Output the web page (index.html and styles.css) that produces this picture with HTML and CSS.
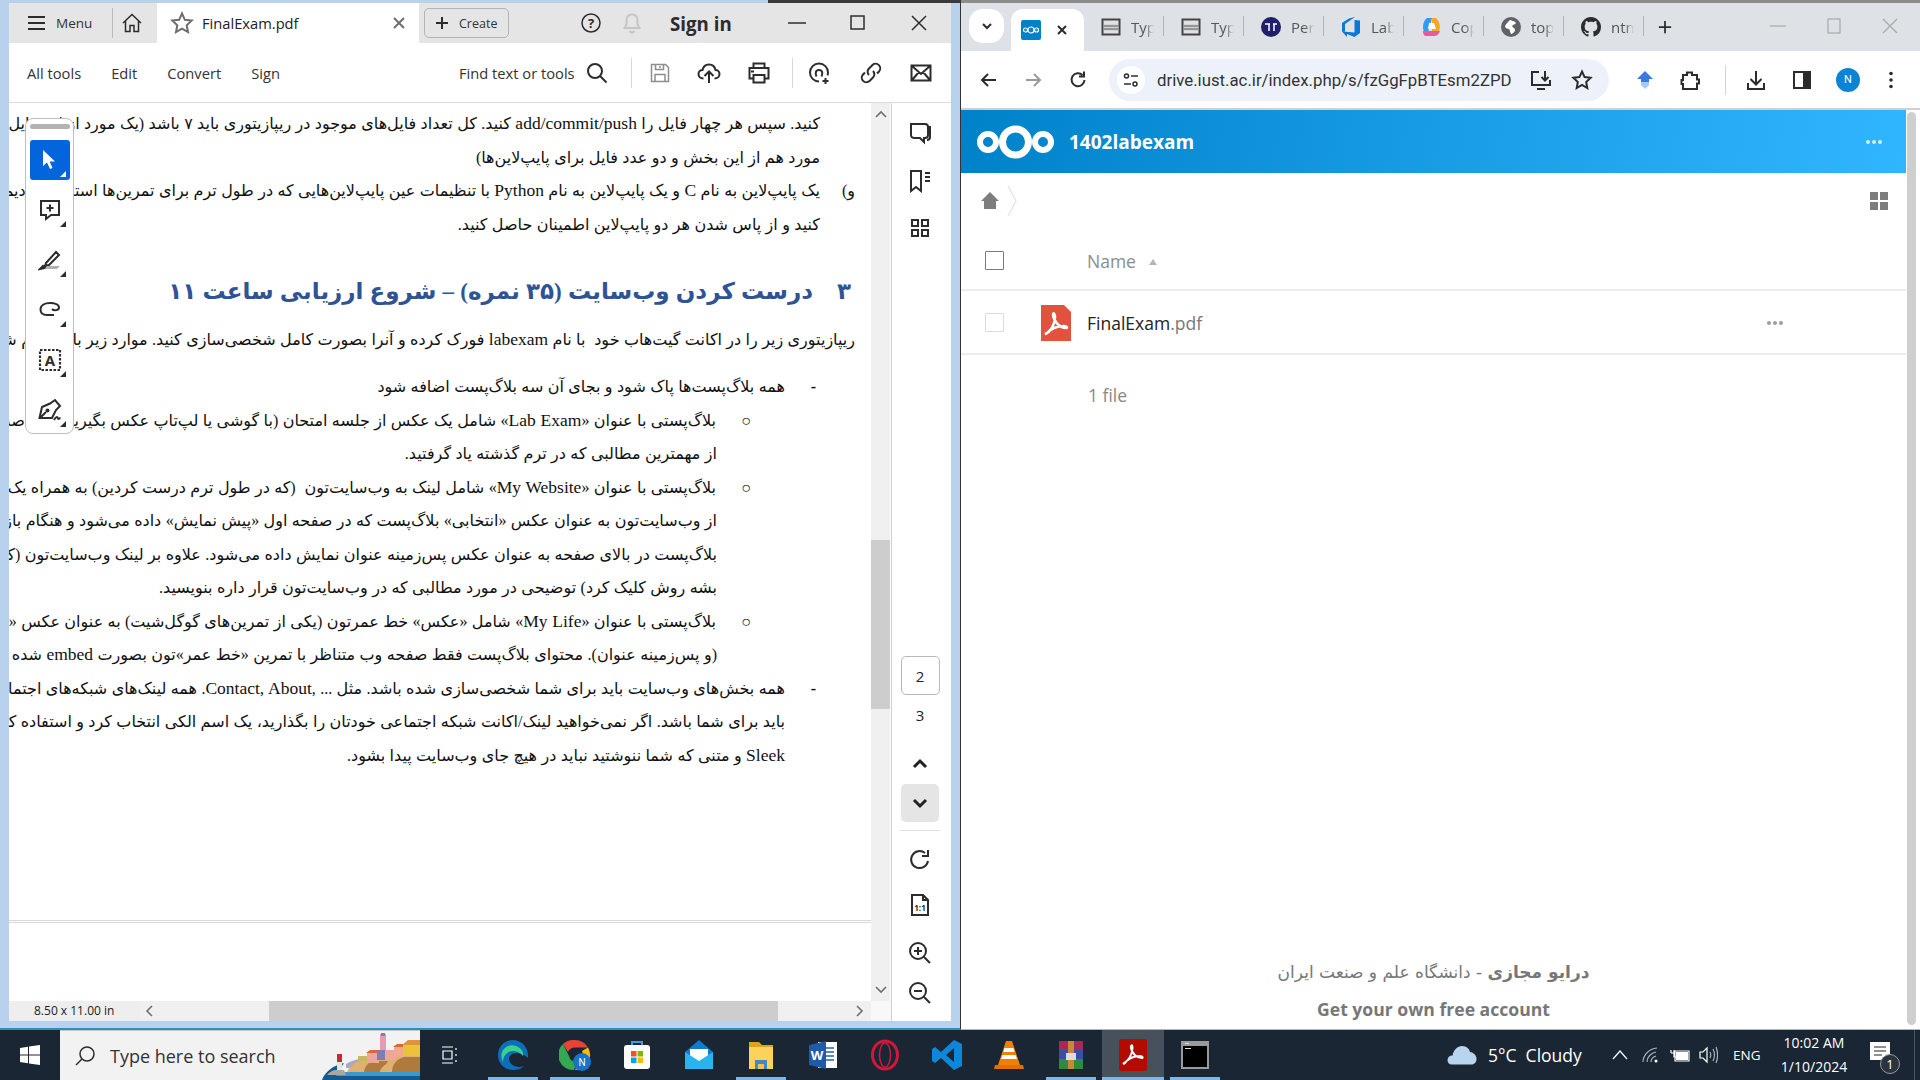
FILE: index.html
```html
<!DOCTYPE html>
<html lang="en">
<head>
<meta charset="utf-8">
<title>FinalExam.pdf</title>
<link rel="stylesheet" href="styles.css">
</head>
<body>
<div class="desktop">
  <div class="windows">
    <section class="acrobat">
      <div class="ac-title">
        <div class="ac-menu">
          <svg class="i20" viewBox="0 0 20 20"><path class="sk2" d="M1 4h17M1 10h17M1 16h17"/></svg>
          <span>Menu</span>
        </div>
        <div class="ac-home">
          <svg class="i22" viewBox="0 0 22 22"><path class="sk15" d="M2 11 11 2.500 20 11M4.500 9v10.500h4.500v-6h4v6h4.500V9"/></svg>
        </div>
        <div class="ac-tab">
          <svg class="i24" viewBox="0 0 24 24"><path class="sk2g" d="M12 2.500l2.900 6.300 6.800.8-5 4.700 1.300 6.800-6-3.400-6 3.400 1.300-6.800-5-4.700 6.800-.8z"/></svg>
          <span class="ac-tabname">FinalExam.pdf</span>
          <svg class="i12" viewBox="0 0 12 12"><path class="sk2g" d="M1 1l10 10M11 1 1 11"/></svg>
        </div>
        <div class="ac-create">
          <svg class="i14" viewBox="0 0 14 14"><path class="sk2" d="M7 1v12M1 7h12"/></svg>
          <span>Create</span>
        </div>
        <div class="ac-right">
          <svg class="i22 help" viewBox="0 0 22 22"><circle class="sk15" cx="11" cy="11" r="9"/><text class="qm" x="11" y="15.500" text-anchor="middle">?</text></svg>
          <svg class="i22 bell" viewBox="0 0 22 22"><path class="skbell" d="M11 2.500c-3.500 0-5.500 2.500-5.500 6v4L3.500 16h15l-2-3.500v-4c0-3.500-2-6-5.500-6zM9 18.500a2 2 0 0 0 4 0"/></svg>
          <span class="signin">Sign in</span>
        </div>
        <div class="ac-win">
          <span class="w-btn"><svg class="i18" viewBox="0 0 18 18"><path class="sk15" d="M0 9h18"/></svg></span>
          <span class="w-btn"><svg class="i18" viewBox="0 0 18 18"><rect class="sk15" x="2" y="2" width="13" height="13"/></svg></span>
          <span class="w-btn"><svg class="i18" viewBox="0 0 18 18"><path class="sk15" d="M2 2l14 14M16 2 2 16"/></svg></span>
        </div>
      </div>

      <div class="ac-tools">
        <nav class="ac-nav"><span>All tools</span><span>Edit</span><span>Convert</span><span>Sign</span></nav>
        <div class="ac-find">
          <span>Find text or tools</span>
          <svg class="i22" viewBox="0 0 22 22"><circle class="sk2" cx="9" cy="9" r="7"/><path class="sk2" d="M14 14l6.500 6.500"/></svg>
        </div>
        <div class="ac-actions">
          <span class="tsep"></span>
          <svg class="i22 a-save" viewBox="0 0 22 22"><path class="sk15l" d="M2.500 2.500h14l3 3v14h-17zM6.500 2.500v5h8v-5M6 19.500v-7h10v7M11 4v2"/></svg>
          <svg class="i24 a-up" viewBox="0 0 24 24"><path class="sk2" d="M6.500 17.500C3 17.500 1.500 15 1.500 13c0-2.500 2-4 4-4 .8-3.500 3.500-5.500 6.500-5.500s5.800 2 6.500 5.500c2.200 0 4 1.700 4 4 0 2.300-1.700 4.500-5 4.500M12 22V10.500M7.500 15l4.500-4.500 4.500 4.500"/></svg>
          <svg class="i24 a-pr" viewBox="0 0 24 24"><path class="sk2" d="M6.500 7V2.500h11V7M6.500 17.500h-4V7h19v10.500h-4M6.500 14h11v7.500h-11z"/><path class="fl" d="M4 9.500h3v2H4z"/></svg>
          <span class="tsep a-sep2"></span>
          <svg class="i24 a-user" viewBox="0 0 24 24"><path class="sk2" d="M11 20.500a9 9 0 1 1 9-9c0 1-.2 2-.5 2.800M8.500 15.500c-1.500-3-1-6.500 2.500-6.500s4 3.500 2.500 6.500M17.500 17v6M14.500 20h6"/></svg>
          <svg class="i24 a-link" viewBox="0 0 24 24"><path class="sk2" d="M10 14a4.500 4.500 0 0 1 0-6.500l3.500-3.500a4.600 4.600 0 0 1 6.500 6.500L18 12.500M14 10a4.500 4.500 0 0 1 0 6.500L10.500 20A4.600 4.600 0 0 1 4 13.500L6 11.500"/></svg>
          <svg class="i24 a-mail" viewBox="0 0 24 24"><path class="sk2" d="M2.500 4.500h19v15h-19zM3 5l9 8 9-8M3 19l6.500-7.500M21 19l-6.500-7.500"/></svg>
        </div>
      </div>

      <div class="ac-body">
        <div class="ac-left">
          <div class="ac-top">
            <div class="doc" dir="rtl">
              <p class="ln">کنید. سپس هر چهار فایل را <span class="la">add/commit/push</span> کنید. کل تعداد فایل‌های موجود در ریپازیتوری باید ۷ باشد (یک مورد از این فایل‌ها در</p>
              <p class="ln">مورد هم از این بخش و دو عدد فایل برای پایپ‌لاین‌ها)</p>
              <p class="ln mk"><span class="mark m35">و)</span><span class="tx">یک پایپ‌لاین به نام <span class="la">C</span> و یک پایپ‌لاین به نام <span class="la">Python</span> با تنظیمات عین پایپ‌لاین‌هایی که در طول ترم برای تمرین‌ها استفاده کردیم</span></p>
              <p class="ln">کنید و از پاس شدن هر دو پایپ‌لاین اطمینان حاصل کنید.</p>
              <h2 class="hd"><span class="hnum">۳</span><span>درست کردن وب‌سایت (۳۵ نمره) – شروع ارزیابی ساعت ۱۱</span></h2>
              <p class="lw">ریپازیتوری زیر را در اکانت گیت‌هاب خود  با نام <span class="la">labexam</span> فورک کرده و آنرا بصورت کامل شخصی‌سازی کنید. موارد زیر باید انجام شود</p>
              <p class="l1 gap"><span class="mark m31">-</span><span class="tx">همه بلاگ‌پست‌ها پاک شود و بجای آن سه بلاگ‌پست اضافه شود</span></p>
              <p class="l2"><span class="mark m35">○</span><span class="tx">بلاگ‌پستی با عنوان «<span class="la">Lab Exam</span>» شامل یک عکس از جلسه امتحان (با گوشی یا لپ‌تاپ عکس بگیرید) و خلاصه‌ای حالت</span></p>
              <p class="l3">از مهمترین مطالبی که در ترم گذشته یاد گرفتید.</p>
              <p class="l2"><span class="mark m35">○</span><span class="tx">بلاگ‌پستی با عنوان «<span class="la">My Website</span>» شامل لینک به وب‌سایت‌تون  (که در طول ترم درست کردین) به همراه یک «عکس</span></p>
              <p class="l3">از وب‌سایت‌تون به عنوان عکس «انتخابی» بلاگ‌پست که در صفحه اول «پیش نمایش» داده می‌شود و هنگام باز کردن</p>
              <p class="l3">بلاگ‌پست در بالای صفحه به عنوان عکس پس‌زمینه عنوان نمایش داده می‌شود. علاوه بر لینک وب‌سایت‌تون (که</p>
              <p class="l3">بشه روش کلیک کرد) توضیحی در مورد مطالبی که در وب‌سایت‌تون قرار داره بنویسید.</p>
              <p class="l2"><span class="mark m35">○</span><span class="tx">بلاگ‌پستی با عنوان «<span class="la">My Life</span>» شامل «عکس» خط عمرتون (یکی از تمرین‌های گوگل‌شیت) به عنوان عکس «انتخابی»</span></p>
              <p class="l3">(و پس‌زمینه عنوان). محتوای بلاگ‌پست فقط صفحه وب متناظر با تمرین «خط عمر»تون بصورت <span class="la">embed</span> شده باشد</p>
              <p class="l1"><span class="mark m31">-</span><span class="tx">همه بخش‌های وب‌سایت باید برای شما شخصی‌سازی شده باشد. مثل ... ,<span class="la">Contact, About</span>. همه لینک‌های شبکه‌های اجتماعی</span></p>
              <p class="l4">باید برای شما باشد. اگر نمی‌خواهید لینک/اکانت شبکه اجتماعی خودتان را بگذارید، یک اسم الکی انتخاب کرد و استفاده کنید</p>
              <p class="l4"><span class="la">Sleek</span> و متنی که شما ننوشتید نباید در هیچ جای وب‌سایت پیدا بشود.</p>
              <div class="pgline"></div>

              <aside class="float" dir="ltr">
                <div class="grip"></div>
                <div class="ft active"><svg class="i24" viewBox="0 0 24 24"><path class="flw" d="M5 2v16l4-3.500 3 6.500 2.500-1-2.800-6.500H17z"/></svg></div>
                <div class="ft"><svg class="i24" viewBox="0 0 24 24"><path class="sk2" d="M3 3h18v14H13l-5 4v-4H3zM12 6.500v7M8.500 10h7"/></svg></div>
                <div class="ft"><svg class="i24" viewBox="0 0 24 24"><path class="sk2" d="M8 15 18 4l3 3-10 10-4 1zM2 21l3-3 2 2z"/><path class="flg" d="M9 18h13l-3 3H7z"/></svg></div>
                <div class="ft"><svg class="i24" viewBox="0 0 24 24"><path class="sk2" d="M16 17H9c-4 0-6.500-2-6.500-5.500C2.500 7 7 5 12 5c4.500 0 9 1.500 9 4.500 0 3-5 3.500-7 1.500"/></svg></div>
                <div class="ft"><svg class="i24" viewBox="0 0 24 24"><path class="dash" d="M2 2h20v20H2z"/><text class="at" x="12" y="18" text-anchor="middle">A</text></svg></div>
                <div class="ft"><svg class="i24" viewBox="0 0 24 24"><path class="sk2" d="M1.500 20 4 9l8-3.500L17 2l5 6-4 4-4 8zM2 20l6-6"/><circle class="fl" cx="9.500" cy="12.500" r="2"/><path class="sk2" d="M16 22c1-2 2-3 3-3s.5 2 1.500 2 1-1 2-1"/></svg></div>
              </aside>
            </div>
            <div class="vscroll">
              <svg class="arr" viewBox="0 0 12 8"><path class="arrp" d="M1 7l5-5 5 5"/></svg>
              <div class="vthumb"></div>
              <svg class="arr arr-b" viewBox="0 0 12 8"><path class="arrp" d="M1 1l5 5 5-5"/></svg>
            </div>
          </div>
          <div class="ac-bottom">
            <span class="dims">8.50 x 11.00 in</span>
            <div class="hscroll">
              <svg class="arrh a-l" viewBox="0 0 8 12"><path class="arrp" d="M7 1 2 6l5 5"/></svg>
              <div class="hthumb"></div>
              <svg class="arrh a-r" viewBox="0 0 8 12"><path class="arrp" d="M1 1l5 5-5 5"/></svg>
            </div>
            <div class="corner"></div>
          </div>
        </div>
        <div class="side">
          <svg class="i24 s-first" viewBox="0 0 24 24"><path class="sk2" d="M3 3h14c2 0 3 1 3 3v8c0 2-1 3-3 3h-1v4l-4-4H7c-3 0-4-1-4-3zM20 6h2v10c0 2-1 3-3 3"/></svg>
          <svg class="i24 s-b" viewBox="0 0 24 24"><path class="sk2" d="M3 2h10v20l-5-4-5 4zM17 4h5M17 8h5M17 12h5"/></svg>
          <svg class="i24 s-g" viewBox="0 0 24 24"><path class="sk2" d="M4 4h6v6H4zM14 4h6v6h-6zM4 14h6v6H4zM14 14h6v6h-6z"/></svg>
          <div class="pg cur">2</div>
          <div class="pg">3</div>
          <svg class="i20 s-up" viewBox="0 0 20 20"><path class="sk3" d="M4 13l6-6 6 6"/></svg>
          <div class="s-down"><svg class="i20" viewBox="0 0 20 20"><path class="sk3" d="M4 7l6 6 6-6"/></svg></div>
          <div class="s-sep"></div>
          <svg class="i24 s-rot" viewBox="0 0 24 24"><path class="sk2" d="M20 13a8.500 8.500 0 1 1-3-8M20 2v6h-6"/></svg>
          <svg class="i24 s-11" viewBox="0 0 24 24"><path class="sk2" d="M4 2h11l5 5v15H4zM15 2v5h5"/><text class="oo" x="12" y="18" text-anchor="middle">1:1</text></svg>
          <svg class="i24 s-zi" viewBox="0 0 24 24"><circle class="sk2" cx="10" cy="10" r="8"/><path class="sk2" d="M16 16l6 6M10 6v8M6 10h8"/></svg>
          <svg class="i24 s-zo" viewBox="0 0 24 24"><circle class="sk2" cx="10" cy="10" r="8"/><path class="sk2" d="M16 16l6 6M6 10h8"/></svg>
        </div>
      </div>
    </section>

    <section class="chrome">
      <div class="ch-tabs">
        <div class="ch-drop"><svg class="i12" viewBox="0 0 12 12"><path class="sk2" d="M2 4l4 4 4-4"/></svg></div>
        <div class="ch-active">
          <span class="nc-fav"><svg viewBox="0 0 20 20" class="i20"><circle class="fav-r" cx="4.500" cy="10" r="2"/><circle class="fav-r" cx="10" cy="10" r="3"/><circle class="fav-r" cx="15.500" cy="10" r="2"/></svg></span>
          <svg class="i12" viewBox="0 0 12 12"><path class="sk2" d="M2 2l8 8M10 2l-8 8"/></svg>
        </div>
        <div class="ch-tab"><svg class="i20" viewBox="0 0 20 20"><path class="sk2d" d="M1.500 2.500h17v15h-17z"/><path class="fl-lg" d="M3 7h14v7H3z"/><path class="sk1d" d="M3 9h14M3 12h14"/></svg><span>Typ</span></div>
        <div class="ch-tab"><svg class="i20" viewBox="0 0 20 20"><path class="sk2d" d="M1.500 2.500h17v15h-17z"/><path class="fl-lg" d="M3 7h14v7H3z"/><path class="sk1d" d="M3 9h14M3 12h14"/></svg><span>Typ</span></div>
        <div class="ch-tab"><svg class="i20" viewBox="0 0 20 20"><circle class="fl-navy" cx="10" cy="10" r="10"/><path class="skw" d="M4 7h5M8 7v7M12 7h4M13 7v7"/></svg><span>Per</span></div>
        <div class="ch-tab"><svg class="i20" viewBox="0 0 20 20"><path class="fl-az" d="M19 3.500v12.500l-5.500 4-7.500-3v3L1 14.500h.5l12 1V3zM14 0 8 1.500 4 4 1 6v8.500L4 15V7z"/></svg><span>Lab</span></div>
        <div class="ch-tab"><svg class="i20" viewBox="0 0 20 20"><path class="c-a" d="M6 1h5L7 15H3c-2-5-1-11 3-14z"/><path class="c-b" d="M11 1h4c3 3 5 8 3 13h-7z"/><path class="c-c" d="M6 14h13c-1 3-3 5-6 5H5c-2 0-3-2-3-5z"/><path class="c-d" d="M8 6h5l2 6H7z"/></svg><span>Cop</span></div>
        <div class="ch-tab"><svg class="i20" viewBox="0 0 20 20"><circle class="fl-g" cx="10" cy="10" r="10"/><path class="fl-w" d="M9 3c2 1 5 1 6 3-1 2-3 1-4 3 1 2 3 2 3 4s-3 4-4 4c-1-2-1-4-2-5-2 0-4-1-4-3 1-2 3-4 5-6z"/></svg><span>top</span></div>
        <div class="ch-tab"><svg class="i20" viewBox="0 0 16 16"><path class="fl" d="M8 0C3.580 0 0 3.580 0 8c0 3.540 2.290 6.530 5.470 7.590.4.070.55-.17.55-.38 0-.19-.01-.82-.01-1.490-2.010.37-2.530-.49-2.690-.94-.09-.23-.48-.94-.82-1.130-.28-.15-.68-.52-.01-.53.63-.01 1.080.58 1.230.82.72 1.210 1.870.87 2.330.66.07-.52.28-.87.51-1.070-1.780-.2-3.640-.89-3.640-3.950 0-.87.31-1.590.82-2.150-.08-.2-.36-1.020.08-2.120 0 0 .67-.21 2.200.82.64-.18 1.320-.27 2-.27.68 0 1.360.09 2 .27 1.530-1.040 2.200-.82 2.200-.82.44 1.100.16 1.920.08 2.120.51.56.82 1.270.82 2.150 0 3.070-1.870 3.750-3.650 3.950.29.25.54.73.54 1.480 0 1.070-.01 1.930-.01 2.200 0 .21.15.46.55.38A8.013 8.013 0 0 0 16 8c0-4.420-3.580-8-8-8z"/></svg><span>ntn</span></div>
        <svg class="ch-plus" viewBox="0 0 16 16"><path class="sk2" d="M8 1v14M1 8h14"/></svg>
        <div class="ch-win">
          <svg class="i16" viewBox="0 0 16 16"><path class="skl" d="M0 8h16"/></svg>
          <svg class="i16" viewBox="0 0 16 16"><rect class="skl" x="2" y="1" width="12" height="14"/></svg>
          <svg class="i16" viewBox="0 0 16 16"><path class="skl" d="M1 1l14 14M15 1 1 15"/></svg>
        </div>
      </div>
      <div class="ch-bar">
        <svg class="i20" viewBox="0 0 20 20"><path class="sk2" d="M17 10H3M9 4l-6 6 6 6"/></svg>
        <svg class="i20" viewBox="0 0 20 20"><path class="sk2g2" d="M3 10h14M11 4l6 6-6 6"/></svg>
        <svg class="i20 b-rel" viewBox="0 0 20 20"><path class="sk2" d="M16.500 10a6.500 6.500 0 1 1-2-5M16 1.500v5h-5"/></svg>
        <div class="omni">
          <span class="tune"><svg class="i18" viewBox="0 0 18 18"><path class="sk15" d="M9 5h7M2 13h7"/><circle class="sk15" cx="4.500" cy="5" r="2"/><circle class="sk15" cx="13" cy="13" r="2"/></svg></span>
          <span class="url">drive.iust.ac.ir/index.php/s/fzGgFpBTEsm2ZPD</span>
          <svg class="i22 om-i" viewBox="0 0 22 22"><path class="sk2" d="M9 3H2v13h18v-5M7 20h8M15 2v9M11.500 8l3.500 3.500L18.500 8"/></svg>
          <svg class="i22 om-s" viewBox="0 0 22 22"><path class="sk2" d="M11 2.500l2.600 5.600 6 .7-4.400 4.200 1.100 6L11 16l-5.300 3 1.100-6-4.400-4.200 6-.7z"/></svg>
        </div>
        <svg class="i20 b-ext" viewBox="0 0 20 20"><path class="fl-b1" d="M10 1l8 8h-4v3H6V9H2z"/><path class="fl-b2" d="M6 12h8v3l-4 4-4-4z"/></svg>
        <svg class="i22 b-puz" viewBox="0 0 22 22"><path class="sk2" d="M4 6h4V3.500h5V6h5v4.500h2v4h-2V20H4v-5h-1.500v-4H4z"/></svg>
        <span class="b-sep"></span>
        <svg class="i22 b-dl" viewBox="0 0 22 22"><path class="sk2" d="M11 2v13M5.500 10l5.500 5.500 5.500-5.500M3 14v6h16v-6"/></svg>
        <svg class="i22 b-side" viewBox="0 0 22 22"><rect class="sk2" x="3" y="3" width="16" height="16"/><path class="fl" d="M12 3h7v16h-7z"/></svg>
        <span class="avatar">N</span>
        <svg class="i20 b-dots" viewBox="0 0 20 20"><circle class="fl" cx="10" cy="3.500" r="1.800"/><circle class="fl" cx="10" cy="10" r="1.800"/><circle class="fl" cx="10" cy="16.500" r="1.800"/></svg>
      </div>
      <div class="ch-page">
        <div class="nc">
          <header class="nc-head">
            <svg class="nc-logo" viewBox="0 0 77 34"><circle class="ring" cx="11" cy="17" r="8"/><circle class="ring2" cx="38.500" cy="17" r="13"/><circle class="ring" cx="66" cy="17" r="8"/></svg>
            <span class="nc-name">1402labexam</span>
            <span class="dots white"><i></i><i></i><i></i></span>
          </header>
          <div class="nc-crumb">
            <svg class="home" viewBox="0 0 20 20"><path class="fl-gm" d="M10 1l9 9h-3v8H4v-8H1z"/></svg>
            <svg class="crumb" viewBox="0 0 10 32"><path class="skcr" d="M1 1l8 15-8 15"/></svg>
            <svg class="grid" viewBox="0 0 18 18"><path class="fl-gm" d="M0 0h8v8H0zM10 0h8v8h-8zM0 10h8v8H0zM10 10h8v8h-8z"/></svg>
          </div>
          <div class="nc-headrow">
            <span class="cb"></span>
            <span class="colname">Name</span>
            <span class="sort"></span>
          </div>
          <div class="nc-row">
            <span class="cb light"></span>
            <svg class="pdf" viewBox="0 0 30 36"><path class="fl-pdf" d="M0 0h23l7 7v29H0z"/><path class="skpdf" d="M4 29c5-2 9-8 10-16 0-5-2-6-2-3 1 7 7 13 13 13 2 0 1-2-2-2-7 0-14 3-17 7-1 1-2 1-2 1z"/></svg>
            <span class="fname">FinalExam<span class="ext">.pdf</span></span>
            <span class="dots gray"><i></i><i></i><i></i></span>
          </div>
          <div class="nc-count">1 file</div>
          <footer class="nc-foot">
            <p class="ft-fa" dir="rtl"><b>درایو مجازی</b> - دانشگاه علم و صنعت ایران</p>
            <p class="ft-en">Get your own free account</p>
          </footer>
        </div>
        <div class="ch-scroll"><div class="ch-thumb"></div></div>
      </div>
    </section>
  </div>

  <footer class="taskbar">
    <div class="tb-start"><svg class="i20" viewBox="0 0 20 20"><path class="fl-w" d="M0 3l8-1.200V9.500H0zM9 1.600 20 0v9.500H9zM0 10.500h8v7.700L0 17zM9 10.500h11V20L9 18.400z"/></svg></div>
    <div class="tb-search">
      <svg class="i22" viewBox="0 0 22 22"><circle class="sk15" cx="13" cy="9" r="7"/><path class="sk15" d="M8 14l-6 6"/></svg>
      <span>Type here to search</span>
      <svg class="scene" viewBox="0 0 98 50">
        <path class="sc-haze" d="M24 34c8-5 16-6 24-4v8H24z"/>
        <path class="sc-rock" d="M25 42c3-6 8-10 15-12 20-3 40-5 58-6v18z"/>
        <path class="sc-rock2" d="M42 42c1-6 4-10 10-11h14c-2 5-8 6-8 11zM70 42c0-7 4-13 12-15h16v15z"/>
        <path class="sc-sea" d="M0 50c3-8 10-14 22-17l-6 9h82v8z"/>
        <path class="sc-sea2" d="M16 42h82v4H14z"/>
        <path class="sc-base" d="M5 45c2-3 6-5 9-5h8l2 5z"/>
        <path class="sc-lh" d="M15 27h5v13h-5z"/><path class="sc-lr" d="M15 24h5v8h-5z"/>
        <path class="sc-y" d="M36 26h12v5H36z"/>
        <path class="sc-h1" d="M45 23h12v10H45z"/><path class="sc-roof" d="M44 23l4-3h9l1 3z"/>
        <path class="sc-bl" d="M55 20h9v10h-9z"/>
        <path class="sc-t" d="M58 4h6v16h-6z"/><path class="sc-bl" d="M59 3h4v3h-4z"/>
        <path class="sc-h1" d="M63 20h10v10H63z"/><path class="sc-h3" d="M72 16h10v11H72z"/><path class="sc-roof" d="M71 17l4-3h8v3z"/>
        <path class="sc-h4" d="M81 14h17v12H81z"/><path class="sc-roof2" d="M80 15l6-5h12v5z"/>
      </svg>
    </div>
    <div class="tb-item"><svg class="i20" viewBox="0 0 20 20"><path class="sk1w" d="M1 2h11M1 18h11M2 6h9v8H2zM15 3v2M15 9v2M15 15v2"/></svg></div>
    <div class="tb-item on"><svg class="i32" viewBox="0 0 32 32"><path class="e-a" d="M16 1C8 1 1 7 1 16c0 9 7 15 15 15 4 0 8-1 11-4-5 2-14 1-15-7 0-3 3-6 7-6 6 0 10 3 12 5 1-11-7-18-15-18z"/><path class="e-b" d="M6 11c3-4 8-6 13-4 5 2 8 6 7 10-3-4-7-5-10-5-5 0-10 4-10 11-2-4-2-9 0-12z"/></svg></div>
    <div class="tb-item on"><svg class="i32" viewBox="0 0 32 32"><path class="g-r" d="M16 1a15 15 0 0 1 13 7.500H16a7.500 7.500 0 0 0-7 4.500L4 5a15 15 0 0 1 12-4z"/><path class="g-y" d="M29 8.500A15 15 0 0 1 16 31l6-11a7.500 7.500 0 0 0 1-8z"/><path class="g-g" d="M4 5l6 12a7.500 7.500 0 0 0 8 6l-3 8A15 15 0 0 1 4 5z"/><circle class="g-b" cx="23" cy="23" r="9"/><text class="g-n" x="23" y="27" text-anchor="middle">N</text></svg></div>
    <div class="tb-item"><svg class="i32" viewBox="0 0 32 32"><path class="sk-st" d="M11 8V3h10v5"/><rect class="st-bg" x="3" y="6" width="26" height="24" rx="3"/><path class="st-r" d="M10 12h5.500v5.500H10z"/><path class="st-g" d="M16.500 12H22v5.500h-5.500z"/><path class="st-b" d="M10 18.500h5.500V24H10z"/><path class="st-y" d="M16.500 18.500H22V24h-5.500z"/></svg></div>
    <div class="tb-item"><svg class="i32" viewBox="0 0 32 32"><path class="m-a" d="M16 1 2 13v17h28V13z"/><path class="m-b" d="M7 10h18v9l-9 6-9-6z"/><path class="m-c" d="M2 13l14 9 14-9v17H2z"/></svg></div>
    <div class="tb-item on"><svg class="i32" viewBox="0 0 32 32"><path class="x-a" d="M4 3h10l3 3h11v24H4z"/><path class="x-b" d="M4 8h24v22H4z"/><path class="x-c" d="M10 21h12v9H10z"/><path class="x-d" d="M13 25h6v5h-6z"/></svg></div>
    <div class="tb-item"><svg class="i32" viewBox="0 0 32 32"><path class="w-a" d="M11 3h19v26H11z"/><path class="w-l" d="M18 9h9M18 13h9M18 17h9M18 21h9"/><path class="w-b" d="M2 6l17-4v28L2 26z"/><text class="w-t" x="10" y="21" text-anchor="middle">W</text></svg></div>
    <div class="tb-item"><svg class="i32" viewBox="0 0 32 32"><ellipse class="op1" cx="16" cy="16" rx="12.500" ry="14"/><ellipse class="op2" cx="16" cy="16" rx="5.500" ry="12"/></svg></div>
    <div class="tb-item"><svg class="i32" viewBox="0 0 32 32"><path class="vs-a" d="M23 1l8 4v22l-8 4-13-12-6 5-3-2V10l3-2 6 5zM23 9l-8 7 8 7z"/></svg></div>
    <div class="tb-item"><svg class="i32" viewBox="0 0 32 32"><path class="v-o" d="M13 2h6l8 24H5z"/><path class="v-w" d="M11.500 9h9l1 4h-11zM9.500 16h13l1.500 4H8z"/><path class="v-o2" d="M2 26h28l1 4H1z"/></svg></div>
    <div class="tb-item on tb-rar"><svg class="i32" viewBox="0 0 32 32"><path class="r-p" d="M4 2h24v9H4z"/><path class="r-b" d="M4 11h24v9H4z"/><path class="r-g" d="M4 20h24v10H4z"/><path class="r-t" d="M13 2h6v28h-6z"/><path class="r-l" d="M11 14h10v7H11z"/></svg></div>
    <div class="tb-item on act"><svg class="i32" viewBox="0 0 28 32"><rect class="ac-bg" width="28" height="32" rx="3"/><path class="ac-s" d="M5 24c5-3 8-9 8.500-15 0-4-2-3-1.500 0 1 6 6 10 11 10 1 0 1-2-2-2-6 0-12 3-15 7-1 1-2 1-1 0z"/></svg></div>
    <div class="tb-item on"><svg class="i32" viewBox="0 0 32 32"><rect class="t-f" x="2" y="2" width="28" height="28"/><path class="t-b" d="M4 7h24v21H4z"/><path class="t-t" d="M6 4h4v1H6zM6 9h6v1H6z"/></svg></div>
    <div class="tray">
      <svg class="cloud" viewBox="0 0 30 20"><path class="cl" d="M5 19.500c-3 0-4.500-2-4.500-4.500 0-2.500 2-4.500 5-4.500C6.500 5 10.500 1 15 1s7.500 3 8 6c3.500.5 6.500 3 6.500 7 0 3-2 5.500-5 5.500z"/></svg>
      <span class="wx">5°C&nbsp; Cloudy</span>
      <svg class="i16 t-up" viewBox="0 0 16 16"><path class="sk1w" d="M1 12l7-8 7 8"/></svg>
      <svg class="i20 t-wifi" viewBox="0 0 20 20"><path class="sk1g" d="M2 17C2 10 8 4 16 3M6 17c0-5 4-9 9-10M10 17c0-3 2-5 5-6"/><circle class="fl-w" cx="15" cy="16" r="1.500"/></svg>
      <svg class="i20 t-bat" viewBox="0 0 20 20"><path class="fl-w" d="M6 7h12v8H6z"/><path class="sk1w" d="M5 6h14v10H5zM1 5v3M4 5v3M1 8h3v4h2"/></svg>
      <svg class="i20 t-vol" viewBox="0 0 20 20"><path class="sk1w" d="M2 7h3l4-4v14l-4-4H2z"/><path class="sk1g" d="M12 7c1 2 1 4 0 6M15 4c2 4 2 8 0 12M18 2c2 5 2 11 0 16"/></svg>
      <span class="lang">ENG</span>
      <div class="clock"><span>10:02 AM</span><span>1/10/2024</span></div>
      <div class="notif"><svg class="i22" viewBox="0 0 22 22"><path class="fl-w" d="M1 1h20v18H1z"/><path class="sk-d" d="M5 6h12M5 10h12M5 14h8"/></svg><span class="badge">1</span></div>
      <span class="showdesk"></span>
    </div>
  </footer>
</div>
</body>
</html>
```

FILE: styles.css
```css
* { box-sizing: border-box; }
html, body { margin: 0; padding: 0; }
body { font-family: "Open Sans", "Noto Sans", sans-serif; width: 1920px; height: 1080px; overflow: hidden; }
svg { display: block; flex: none; }
p, h2 { margin: 0; }
.i12 { width: 12px; height: 12px; }
.i14 { width: 14px; height: 14px; }
.i16 { width: 16px; height: 16px; }
.i18 { width: 18px; height: 18px; }
.i20 { width: 20px; height: 20px; }
.i22 { width: 22px; height: 22px; }
.i24 { width: 24px; height: 24px; }
.i32 { width: 32px; height: 32px; }

.sk15, .sk2, .sk3, .sk2g, .sk2g2, .sk15l, .skbell, .skl, .skw, .sk1w, .sk1g, .skcr, .skpdf, .sk-d, .sk-st, .w-l, .arrp, .dash, .ring, .ring2, .op1, .op2, .sk2d, .sk1d { fill: none; }
.sk15 { stroke: #2c2c2c; stroke-width: 1.5; }
.sk2 { stroke: #2c2c2c; stroke-width: 2; }
.sk3 { stroke: #222; stroke-width: 3; }
.sk2g { stroke: #6e6e6e; stroke-width: 2; }
.sk2g2 { stroke: #9a9a9a; stroke-width: 2; }
.sk15l { stroke: #8e8e8e; stroke-width: 1.5; }
.skbell { stroke: #c6c6c6; stroke-width: 2; }
.skl { stroke: #a8a8a8; stroke-width: 1.200; }
.skw { stroke: #fff; stroke-width: 1.500; }
.sk1w { stroke: #fff; stroke-width: 1.200; }
.sk1g { stroke: #a9b0b8; stroke-width: 1.200; }
.sk-d { stroke: #222; stroke-width: 1.200; }
.sk2d { stroke: #444; stroke-width: 2; }
.sk1d { stroke: #555; stroke-width: 1; }
.fl { fill: #2c2c2c; }
.flw { fill: #fff; }
.flg { fill: #b0b0b0; }
.fl-w { fill: #fff; }
.fl-g { fill: #5f6368; }
.fl-lg { fill: #d4d4d4; }
.fl-navy { fill: #1f1f6b; }
.fl-az { fill: #0a78d4; }
.fl-gm { fill: #7d7d7d; }
.c-a { fill: #2f9cf0; } .c-b { fill: #f5a623; } .c-c { fill: #e85a9a; } .c-d { fill: #fff; }
.qm { font: bold 13px "Open Sans", sans-serif; fill: #2c2c2c; }
.at { font: bold 15px "Open Sans", sans-serif; fill: #2c2c2c; }
.oo { font: bold 8px "Open Sans", sans-serif; fill: #2c2c2c; }
.dash { stroke: #2c2c2c; stroke-width: 2.200; stroke-dasharray: 2.500 1.500; }

.desktop { width: 1920px; height: 1080px; background: #1a2633; display: flex; flex-direction: column; overflow: hidden; }
.windows { display: flex; height: 1030px; flex: none; }

/* Acrobat */
.acrobat { width: 960px; height: 1030px; flex: none; background: linear-gradient(90deg, #b8d1ec 768px, #3a3a3a 768px) top / 100% 3px no-repeat, #b8d1ec; border-bottom: 2px solid #2f8fb0; padding: 3px 9px 7px 9px; display: flex; flex-direction: column; }
.ac-title { height: 40px; flex: none; background: #e5e5e5; display: flex; align-items: center; }
.ac-menu { display: flex; align-items: center; width: 104px; height: 30px; padding-left: 18px; gap: 9px; font-size: 13.500px; color: #333; border-right: 1px solid #b9b9b9; flex: none; }
.ac-home { width: 44px; display: flex; justify-content: center; padding-right: 6px; flex: none; }
.ac-tab { align-self: stretch; width: 262px; background: #fff; display: flex; align-items: center; padding: 0 14px 0 13px; font-size: 14.700px; color: #222; flex: none; }
.ac-tabname { margin-left: 8px; flex: 1; }
.ac-create { margin-left: 5px; width: 85px; height: 30px; border: 1px solid #b3b3b3; border-radius: 5px; display: flex; align-items: center; gap: 10px; padding-left: 10px; font-size: 12.500px; color: #333; flex: none; }
.ac-right { display: flex; align-items: center; margin-left: 71px; }
.bell { margin-left: 19px; }
.signin { margin-left: 27px; font-size: 18.700px; font-weight: 700; color: #2c2c2c; width: 64px; white-space: nowrap; }
.ac-win { display: flex; margin-left: 32px; }
.w-btn { width: 61px; display: flex; justify-content: center; }

.ac-tools { height: 60px; flex: none; background: #fff; border-bottom: 1px solid #dcdcdc; display: flex; align-items: center; padding: 0 0 0 18px; font-size: 14.700px; color: #333; }
.ac-nav { display: flex; gap: 30px; width: 432px; flex: none; }
.ac-find { display: flex; align-items: center; gap: 11px; width: 172px; white-space: nowrap; flex: none; }
.ac-actions { display: flex; align-items: center; flex: none; }
.tsep { width: 1px; height: 30px; background: #d8d8d8; }
.a-save { margin-left: 17px; }
.a-up { margin-left: 26px; }
.a-pr { margin-left: 26px; }
.a-sep2 { margin-left: 21px; }
.a-user { margin-left: 15px; }
.a-link { margin-left: 27px; }
.a-mail { margin-left: 26px; }

.ac-body { flex: 1; display: flex; min-height: 0; background: #fff; }
.ac-left { width: 883px; display: flex; flex-direction: column; flex: none; border-right: 1px solid #d0d0d0; }
.ac-top { flex: 1; display: flex; min-height: 0; }
.doc { width: 862px; position: relative; overflow: hidden; padding-top: 4px; font-family: "Liberation Serif", "DejaVu Sans", serif; font-size: 16px; word-spacing: 0.400px; color: #111; }
.doc p { height: 33.500px; line-height: 33.500px; white-space: pre; overflow: hidden; }
.la { font-size: 17.500px; }
.ln { padding-right: 51px; }
.lw { padding-right: 16px; }
.l1 { padding-right: 55px; display: flex; }
.l2 { padding-right: 120px; display: flex; }
.l3 { padding-right: 154px; }
.l4 { padding-right: 86px; }
.ln.mk { padding-right: 16px; display: flex; }
.tx { flex: none; }
.gap { margin-top: 13.500px; }
.mark { flex: none; }
.m35 { width: 35px; }
.m31 { width: 31px; font-weight: 700; }
.hd { height: 82px; padding: 20px 20px 0 0; display: flex; align-items: center; font-size: 23px; line-height: 34px; font-weight: 700; color: #2f5496; white-space: nowrap; font-family: "Liberation Serif", "DejaVu Sans", serif; }
.hnum { width: 38px; flex: none; }
.pgline { height: 3px; border-top: 1px solid #d8d8d8; border-bottom: 1px solid #d8d8d8; position: absolute; left: 0; right: 0; top: 817px; }

.float { position: absolute; left: 16px; top: 15px; width: 49px; height: 316px; background: #fff; border: 1px solid #bdbdbd; border-radius: 8px; display: flex; flex-direction: column; align-items: center; }
.grip { width: 40px; height: 5px; margin-top: 5px; background: #b3b3b3; border-radius: 3px; flex: none; }
.ft { width: 40px; height: 40px; margin-top: 10px; display: flex; align-items: center; justify-content: center; position: relative; flex: none; }
.grip + .ft { margin-top: 11px; }
.active { background: #0265dc; border-radius: 3px; }
.ft::after { content: ""; position: absolute; right: 4px; bottom: 3px; border-style: solid; border-width: 0 0 6px 6px; border-color: transparent transparent #2c2c2c transparent; }
.active::after { border-bottom-color: #fff; }

.vscroll { width: 19px; background: #f0f0f0; display: flex; flex-direction: column; align-items: center; padding-top: 7px; }
.arr { width: 12px; height: 8px; }
.arrp { stroke: #6e6e6e; stroke-width: 1.600; }
.vthumb { width: 19px; height: 169px; margin-top: 422px; background: #cdcdcd; }
.arr-b { margin-top: auto; margin-bottom: 7px; }
.ac-bottom { height: 20px; flex: none; display: flex; }
.dims { width: 131px; flex: none; background: #eeeeee; font-size: 12px; line-height: 20px; color: #222; padding-left: 25px; white-space: nowrap; }
.hscroll { width: 731px; flex: none; background: #f0f0f0; display: flex; align-items: center; }
.arrh { width: 8px; height: 12px; }
.a-l { margin-left: 5px; }
.hthumb { width: 509px; height: 20px; background: #cdcdcd; margin-left: 116px; flex: none; }
.a-r { margin-left: 78px; }
.corner { flex: 1; background: #f8f8f8; }

.side { flex: 1; background: #fff; display: flex; flex-direction: column; align-items: center; padding: 18px 3px 0 0; }
.s-b { margin-top: 24px; }
.s-g { margin-top: 23px; }
.pg { width: 39px; height: 39px; display: flex; align-items: center; justify-content: center; font-size: 15px; color: #222; flex: none; }
.pg.cur { margin-top: 416px; border: 1px solid #b8b8b8; border-radius: 5px; }
.s-up { margin-top: 20px; }
.s-down { width: 38px; height: 38px; margin-top: 10px; background: #e5e5e5; border-radius: 5px; display: flex; align-items: center; justify-content: center; flex: none; }
.s-sep { width: 40px; height: 1px; margin-top: 8px; background: #e0e0e0; flex: none; }
.s-rot { margin-top: 17px; }
.s-11 { margin-top: 21px; }
.s-zi { margin-top: 24px; }
.s-zo { margin-top: 16px; }

/* Chrome */
.chrome { width: 960px; height: 1030px; flex: none; display: flex; flex-direction: column; background: #fff; border-left: 1px solid #333; border-bottom: 1px solid #b5b5b5; }
.ch-tabs { height: 51px; flex: none; background: #dee1e6; border-top: 3px solid #8c8c8c; display: flex; align-items: flex-end; padding-left: 8px; }
.ch-drop { width: 35px; height: 34px; margin-bottom: 8px; background: #fff; border-radius: 14px; display: flex; align-items: center; justify-content: center; flex: none; }
.ch-active { width: 73px; height: 42px; margin-left: 7px; background: #fff; border-radius: 12px 12px 0 0; display: flex; align-items: center; padding: 0 16px 0 10px; justify-content: space-between; flex: none; }
.nc-fav { width: 20px; height: 20px; background: #0082c9; border-radius: 2px; display: block; }
.fav-r { fill: none; stroke: #fff; stroke-width: 1.200; }
.ch-tab { width: 80px; height: 48px; display: flex; align-items: center; gap: 10px; padding-left: 17px; position: relative; font-size: 15px; color: #555; flex: none; }
.ch-tab span { width: 23px; overflow: hidden; white-space: nowrap; flex: none; -webkit-mask-image: linear-gradient(90deg, #000 60%, transparent); mask-image: linear-gradient(90deg, #000 60%, transparent); }
.ch-tab::after { content: ""; position: absolute; right: 0; top: 13px; width: 1px; height: 20px; background: #b0b3b8; }
.ch-plus { width: 14px; height: 14px; margin: 0 0 17px 14px; }
.ch-win { display: flex; gap: 40px; margin-left: 98px; margin-bottom: 17px; }
.ch-bar { height: 59px; flex: none; background: #fff; border-bottom: 2px solid #d0d0d0; display: flex; align-items: center; padding-left: 18px; gap: 24px; }
.b-rel { margin-left: 1px; }
.omni { width: 500px; height: 42px; margin-left: -3px; background: #edf2fa; border-radius: 21px; display: flex; align-items: center; padding-left: 8px; flex: none; }
.tune { width: 28px; height: 28px; border-radius: 50%; background: #fff; display: flex; align-items: center; justify-content: center; flex: none; }
.url { margin-left: 12px; width: 358px; font-family: "Roboto", sans-serif; font-size: 16.800px; color: #333; white-space: nowrap; flex: none; }
.om-i { margin-left: 15px; }
.om-s { margin-left: 19px; }
.b-ext { margin-left: 2px; }
.fl-b1 { fill: #3a7ae0; } .fl-b2 { fill: #a9c9f5; }
.b-sep { width: 1px; height: 30px; background: #c8d6ea; flex: none; }
.b-dl { margin-left: -5px; }
.avatar { width: 24px; height: 24px; margin-left: -1px; border-radius: 50%; background: #0b84d6; color: #fff; font: 11px/24px "Roboto", sans-serif; text-align: center; flex: none; }
.b-dots { margin-left: -3px; }
.ch-page { flex: 1; display: flex; min-height: 0; }
.nc { width: 945px; flex: none; display: flex; flex-direction: column; }
.nc-head { height: 63px; flex: none; background: linear-gradient(100deg, #0082c9, #30b6ff); display: flex; align-items: center; padding: 0 24px 0 16px; color: #fff; }
.nc-logo { width: 77px; height: 34px; }
.ring { stroke: #fff; stroke-width: 6; }
.ring2 { stroke: #fff; stroke-width: 7; }
.nc-name { margin-left: 15px; font-size: 19px; font-weight: 700; flex: 1; }
.dots { display: flex; gap: 2px; }
.dots i { width: 4px; height: 4px; border-radius: 50%; display: block; }
.white i { background: #d6eeff; }
.gray i { background: #9e9e9e; }
.nc-crumb { height: 55px; flex: none; display: flex; align-items: center; padding: 0 18px 0 19px; }
.home { width: 20px; height: 20px; }
.crumb { width: 10px; height: 32px; margin-left: 7px; }
.skcr { stroke: #dcdcdc; stroke-width: 1; }
.grid { width: 18px; height: 18px; margin-left: auto; }
.nc-headrow { height: 63px; flex: none; display: flex; align-items: center; padding: 4px 0 0 24px; border-bottom: 2px solid #ededed; }
.cb { width: 19px; height: 19px; border: 1px solid #7a7a7a; border-radius: 1px; background: #fff; flex: none; }
.cb.light { border-color: #dcdcdc; }
.colname { margin-left: 83px; font-size: 17.500px; color: #8c8c8c; }
.sort { margin-left: 13px; margin-top: 3px; border-style: solid; border-width: 0 4.500px 6px; border-color: transparent transparent #b5b5b5; }
.nc-row { height: 64px; flex: none; display: flex; align-items: center; padding: 1px 0 0 24px; border-bottom: 2px solid #ededed; }
.pdf { width: 30px; height: 36px; margin-left: 37px; }
.fl-pdf { fill: #e2523f; }
.skpdf { stroke: #fff; stroke-width: 2.500; }
.fname { margin-left: 16px; font-size: 17.500px; color: #222; width: 680px; flex: none; }
.ext { color: #777; }
.nc-count { margin-top: 28px; padding-left: 127px; font-size: 17.500px; color: #888; }
.nc-foot { margin-top: auto; padding-bottom: 8px; text-align: center; color: #777; }
.ft-fa { font-size: 17px; line-height: 24px; font-family: "DejaVu Sans", sans-serif; margin-bottom: 13px; }
.ft-en { font-size: 17.600px; font-weight: 700; line-height: 24px; }
.ch-scroll { flex: 1; background: #fff; padding: 2px 4px 4px 1px; }
.ch-thumb { height: 100%; background: #cfcfcf; border-radius: 5px; }

/* Taskbar */
.taskbar { height: 50px; flex: none; background: #1a2633; display: flex; align-items: stretch; color: #fff; }
.tb-start { width: 60px; display: flex; align-items: center; justify-content: center; flex: none; }
.tb-search { width: 360px; background: #f2f2f2; border-top: 1px solid #c8c8c8; display: flex; align-items: center; padding-left: 14px; gap: 14px; font-size: 18px; color: #333; position: relative; overflow: hidden; flex: none; }
.scene { position: absolute; right: 0; bottom: 0; width: 98px; height: 50px; }
.sc-haze { fill: #a8a8c8; }
.sc-sea { fill: #14598f; } .sc-sea2 { fill: #3a9ad0; }
.sc-rock { fill: #e0b070; } .sc-rock2 { fill: #b07a3c; }
.sc-base { fill: #a8a8a0; } .sc-lh { fill: #e8e4e0; } .sc-lr { fill: #c03030; }
.sc-y { fill: #c8b860; }
.sc-h1 { fill: #eea59a; } .sc-h3 { fill: #f0a890; } .sc-h4 { fill: #ecc23a; }
.sc-roof { fill: #d8683c; } .sc-roof2 { fill: #e0933a; }
.sc-bl { fill: #7a80b0; } .sc-t { fill: #e89ab0; }
.tb-item { width: 62px; display: flex; align-items: center; justify-content: center; position: relative; flex: none; }
.tb-item.on::after { content: ""; position: absolute; left: 6px; right: 6px; bottom: 0; height: 3px; background: #76b9ed; }
.act { background: #46515d; }
.act.on::after { left: 0; right: 0; }
.e-a { fill: #0c6fb8; } .e-b { fill: #3ecf8e; }
.g-r { fill: #ea4335; } .g-y { fill: #fbbc04; } .g-g { fill: #34a853; } .g-b { fill: #1a73c8; }
.g-n { font: 10px "Roboto", sans-serif; fill: #fff; }
.sk-st { stroke: #3a9ee8; stroke-width: 2; }
.st-bg { fill: #fff; } .st-r { fill: #f25022; } .st-g { fill: #7fba00; } .st-b { fill: #00a4ef; } .st-y { fill: #ffb900; }
.m-a { fill: #0f7ad0; } .m-b { fill: #fff; } .m-c { fill: #28b4ee; }
.x-a { fill: #e0a21c; } .x-b { fill: #fbd25a; } .x-c { fill: #4088c8; } .x-d { fill: #f0c14e; }
.w-a { fill: #fff; } .w-l { stroke: #2b62b0; stroke-width: 1.500; } .w-b { fill: #1f5ba8; }
.w-t { font: bold 13px "Open Sans", sans-serif; fill: #fff; }
.op1 { stroke: #d2173c; stroke-width: 3; } .op2 { stroke: #d2173c; stroke-width: 1.500; }
.vs-a { fill: #0f87d8; fill-rule: evenodd; }
.v-o { fill: #f08000; } .v-w { fill: #fff; } .v-o2 { fill: #e07000; }
.r-p { fill: #a8285a; } .r-b { fill: #3a4ea8; } .r-g { fill: #2e8a3c; } .r-t { fill: #c8873a; } .r-l { fill: #dcdcdc; }
.ac-bg { fill: #b30b00; }
.ac-s { fill: none; stroke: #fff; stroke-width: 2; }
.t-f { fill: #9a9a9a; } .t-b { fill: #000; } .t-t { fill: #ddd; }
.tray { flex: 1; display: flex; align-items: center; font-size: 16px; min-width: 0; }
.cloud { width: 30px; height: 20px; margin-left: 221px; }
.cl { fill: #b8d4ef; }
.wx { margin-left: 11px; font-size: 17.500px; white-space: nowrap; width: 96px; flex: none; }
.t-up { margin-left: 28px; }
.t-wifi { margin-left: 13px; }
.t-bat { margin-left: 9px; }
.t-vol { margin-left: 8px; }
.lang { margin-left: 15px; font-size: 13.500px; width: 34px; flex: none; }
.clock { margin-left: 12px; width: 70px; flex: none; display: flex; flex-direction: column; align-items: center; gap: 6px; font-size: 14px; line-height: 18px; white-space: nowrap; }
.notif { margin-left: 20px; position: relative; margin-top: -6px; }
.badge { position: absolute; right: -9px; bottom: -11px; width: 20px; height: 20px; border-radius: 50%; background: #2a3440; border: 1px solid #999; font-size: 13px; line-height: 18px; text-align: center; }
.showdesk { width: 1px; height: 50px; background: #4c5560; margin-left: 23px; flex: none; }
```
